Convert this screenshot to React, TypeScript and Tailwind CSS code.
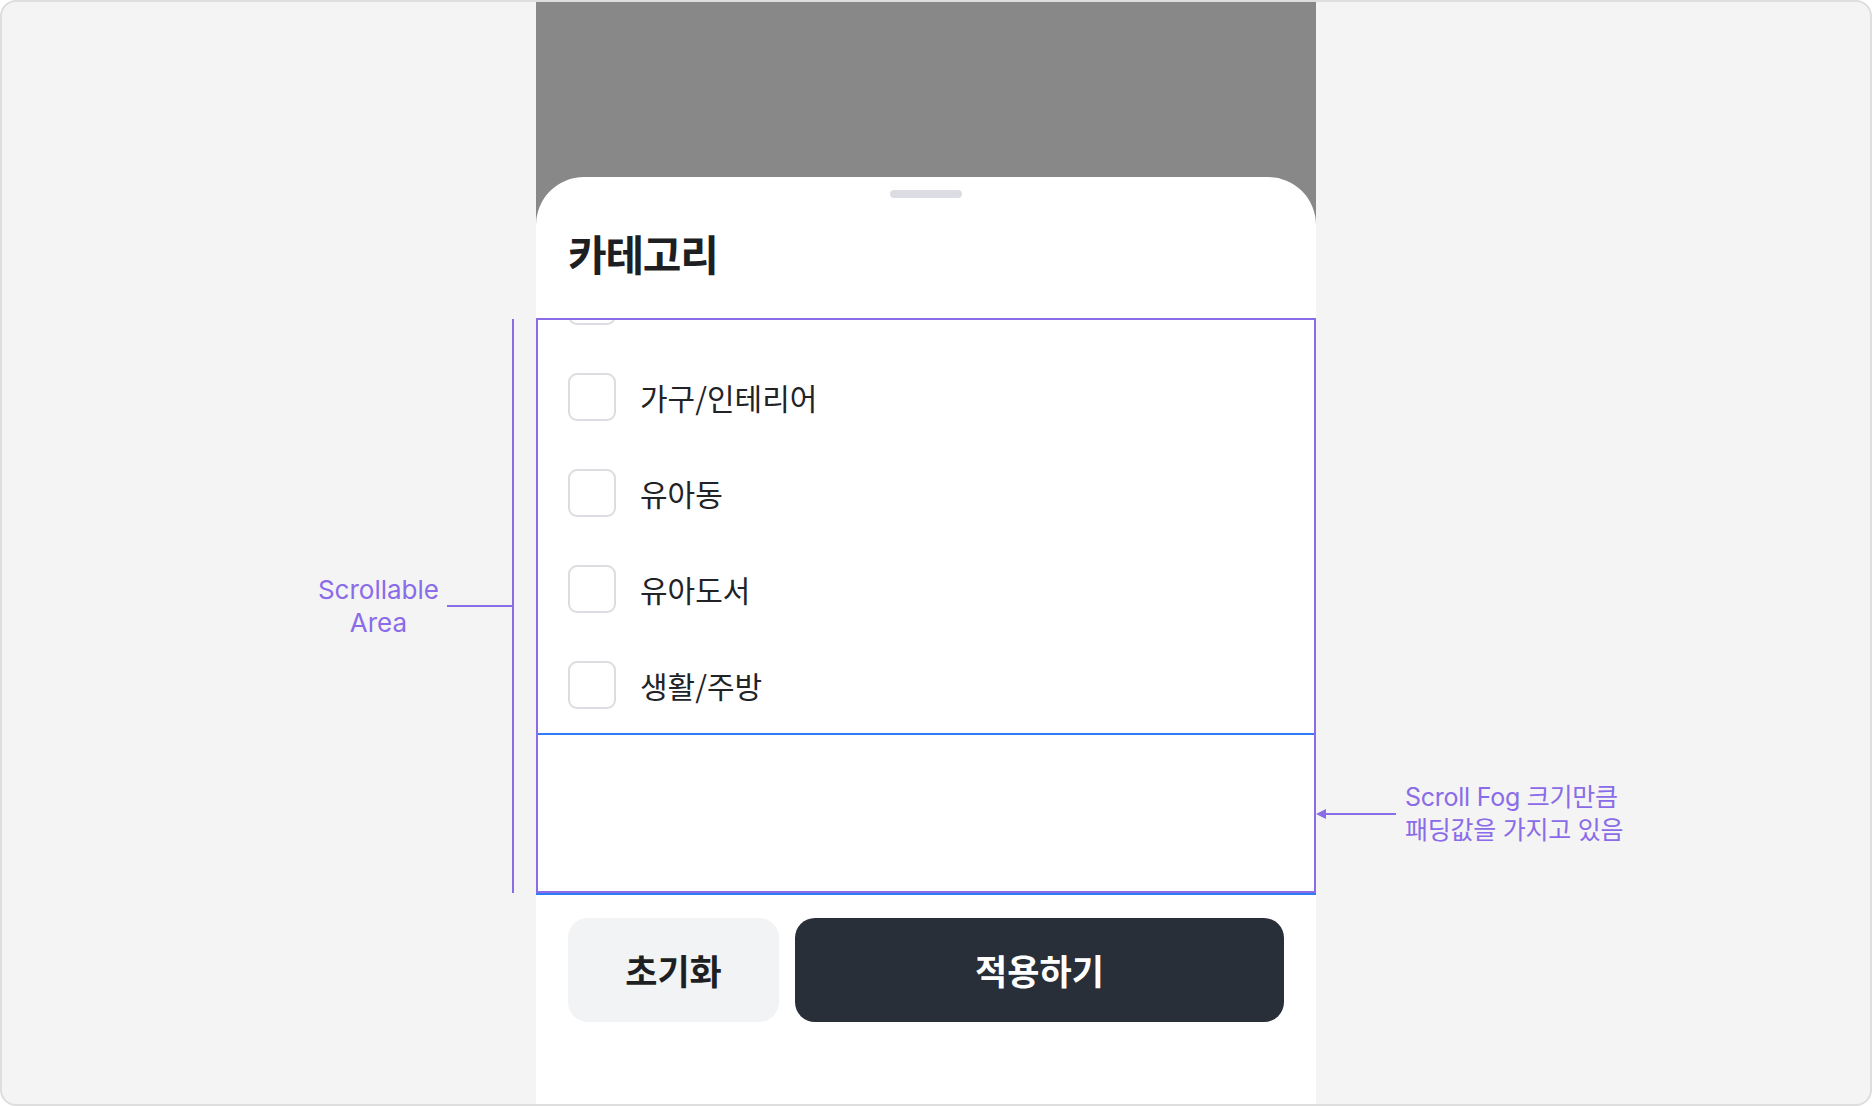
import { useLayoutEffect, useRef } from 'react';

const categories = [
  '패션의류',
  '패션잡화',
  '뷰티',
  '스포츠/레저',
  '디지털/가전',
  '가구/인테리어',
  '유아동',
  '유아도서',
  '생활/주방',
];

function CategoryRow({ label }: { label: string }) {
  return (
    <label className="flex h-[96px] items-center gap-6 px-8">
      <span className="h-12 w-12 shrink-0 rounded-[9px] border-2 border-[#dcdce1] bg-white" />
      <span className="text-[30px] leading-[40px] text-[#222327]">{label}</span>
    </label>
  );
}

function ArrowLeft() {
  return (
    <svg width="80" height="12" viewBox="0 0 80 12" className="shrink-0">
      <path d="M0 6 L10 1 L10 11 Z" fill="#8a6be8" />
      <rect x="8" y="5" width="72" height="2" fill="#8a6be8" />
    </svg>
  );
}

export default function App() {
  const listRef = useRef<HTMLDivElement>(null);

  // the list is shown scrolled all the way down, so the fog padding sits under the last item
  useLayoutEffect(() => {
    const el = listRef.current;
    if (el) el.scrollTop = el.scrollHeight;
  }, []);

  return (
    <div className="h-[1106px] w-[1872px] bg-white font-['Inter','Noto_Sans_CJK_KR',sans-serif]">
      <div className="flex h-full w-full overflow-hidden rounded-[16px] border-2 border-[#dedede] bg-[#f4f4f4]">
        {/* left note */}
        <div className="w-[534px] shrink-0 pt-[317px]">
          <div className="flex h-[574px] items-center justify-end pr-[22px]">
            <div className="mr-2 text-center text-[26px] leading-[33px] text-[#8a6be8]">
              Scrollable
              <br />
              Area
            </div>
            <div className="h-[2px] w-[65px] bg-[#8a6be8]" />
            <div className="h-full w-[2px] bg-[#8a6be8]" />
          </div>
        </div>

        {/* bottom sheet */}
        <div className="-mt-[2px] flex w-[780px] shrink-0 flex-col bg-[#888888]">
          <div className="mt-[177px] flex flex-1 flex-col rounded-t-[48px] bg-white">
            <div className="h-[141px] shrink-0">
              <div className="mx-auto mt-[13px] h-2 w-[72px] rounded-full bg-[#dcdde2]" />
              <h1 className="mt-[30px] px-8 font-['Noto_Sans_CJK_KR',sans-serif] text-[42px] font-bold leading-[50px] tracking-[-0.03em] text-[#1e1f22]">
                카테고리
              </h1>
            </div>

            <div className="relative h-[575px] shrink-0">
              <div
                ref={listRef}
                className="h-full overflow-y-auto pb-[160px] font-['Noto_Sans_CJK_KR',sans-serif] [scrollbar-width:none]"
              >
                {categories.map((c) => (
                  <CategoryRow key={c} label={c} />
                ))}
              </div>
              <div className="pointer-events-none absolute inset-x-0 bottom-[-2px] h-[162px] border-2 border-[#2f7cf6]" />
              <div className="pointer-events-none absolute inset-0 border-2 border-[#8a6be8]" />
            </div>

            <div className="flex gap-4 px-8 pt-[25px] font-['Noto_Sans_CJK_KR',sans-serif]">
              <button className="h-[104px] w-[211px] rounded-[20px] bg-[#f2f3f5] text-[35px] font-bold text-[#1e1f22]">
                초기화
              </button>
              <button className="h-[104px] flex-1 rounded-[20px] bg-[#282f39] text-[35px] font-bold text-white">
                적용하기
              </button>
            </div>
          </div>
        </div>

        {/* right note */}
        <div className="flex-1 pt-[731px]">
          <div className="flex h-[162px] items-center">
            <ArrowLeft />
            <div className="ml-[9px] text-[25px] leading-[33px] tracking-[-0.01em] text-[#8a6be8]">
              Scroll Fog 크기만큼
              <br />
              패딩값을 가지고 있음
            </div>
          </div>
        </div>
      </div>
    </div>
  );
}
